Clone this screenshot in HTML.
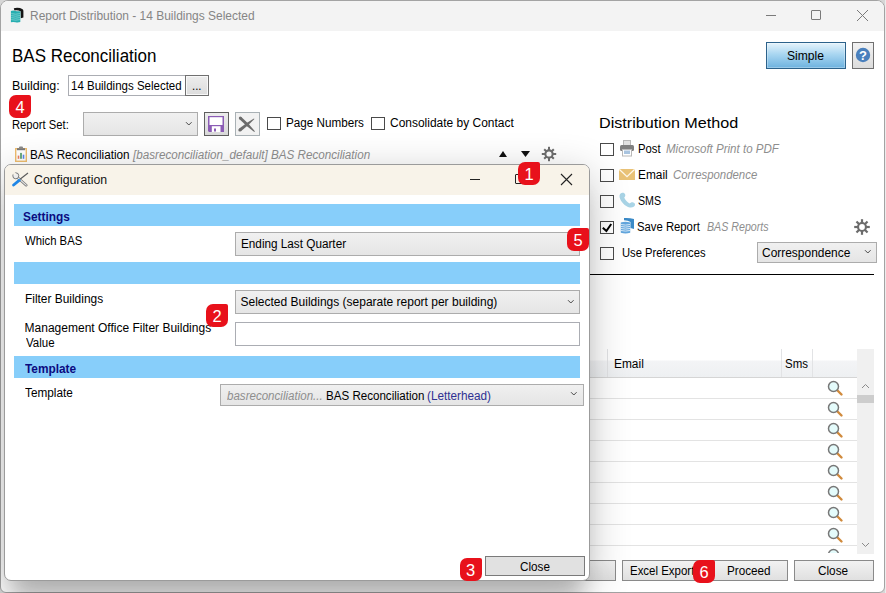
<!DOCTYPE html>
<html><head><meta charset="utf-8">
<style>
*{box-sizing:border-box;margin:0;padding:0}
html,body{width:886px;height:593px;overflow:hidden;background:#d6d6d6;position:relative}
body{font-family:"Liberation Sans",sans-serif;font-size:11.7px;color:#000}
.a{position:absolute}
.t{position:absolute;white-space:nowrap;line-height:20px;font-size:11.7px}
.i{font-style:italic;color:#9a9a9a}
.win{position:absolute;left:0;top:0;width:885px;height:593px;background:#fff;border:1px solid #a3a3a3;border-radius:8px 8px 6px 6px;overflow:hidden}
.tb{position:absolute;left:0;top:0;width:886px;height:31px;background:#f3f3f3}
.cb{position:absolute;width:14px;height:13px;border:1px solid #4a4a4a;background:#fff}
.btn{position:absolute;background:#e1e1e1;border:1px solid #adadad}
.combo{position:absolute;background:linear-gradient(#f0f0f0,#e5e5e5);border:1px solid #acacac}
.badge{position:absolute;width:22px;height:23px;background:#e8111b;border-radius:7px 2px 7px 7px;color:#fff;font-size:16.5px;line-height:24px;text-align:center}
.band{position:absolute;left:14px;width:566px;background:#87cefa}
.bt{font-weight:bold;color:#0b0b80}
</style></head><body>
<div class="a" style="left:885px;top:0;width:1px;height:593px;background:#ececec"></div>
<div class="win">
</div>
<!-- absolute coordinates in page space -->
<div class="a" style="left:1px;top:1px;width:883px;height:30px;background:#f3f3f3;border-radius:7px 7px 0 0"></div>

<!-- title icon -->
<svg class="a" style="left:10px;top:7px" width="15" height="17" viewBox="0 0 15 17">
<path d="M3.8 1.2 Q9 0.2 12.6 2.2 Q13.4 2.8 13.4 4 L13.4 10.6 L10.8 11.2 L10.6 4.2 Q7.6 2.8 4.4 3.4 Z" fill="#151515"/>
<path d="M0.9 4 Q3 3.2 5.5 3.9 Q8 4.6 10.3 4.2 L10.3 15 Q8 15.8 5.5 15.2 Q3 14.6 0.9 15.2 Z" fill="#27aeb0"/>
<path d="M1.2 6.6 Q5.5 7.8 10 6.6 M1.2 8.6 Q5.5 9.8 10 8.6 M1.2 10.6 Q5.5 11.8 10 10.6 M1.2 12.6 Q5.5 13.8 10 12.6" stroke="#8fd8d8" stroke-width="0.7" fill="none"/>
</svg>
<div class="t" style="left:29.7px;top:6px;font-size:12px;color:#858585;transform:scaleX(0.996);transform-origin:0 0">Report Distribution - 14 Buildings Selected</div>
<!-- caption buttons -->
<div class="a" style="left:766px;top:15px;width:10px;height:1px;background:#7a7a7a"></div>
<div class="a" style="left:811px;top:10px;width:10px;height:10px;border:1px solid #7a7a7a;border-radius:1px"></div>
<svg class="a" style="left:856px;top:9px" width="13" height="13" viewBox="0 0 13 13"><path d="M1 1 L12 12 M12 1 L1 12" stroke="#7a7a7a" stroke-width="1"/></svg>

<div class="t" style="left:12.43px;top:46px;font-size:17.5px;color:#000;transform:scaleX(0.9707);transform-origin:0 0">BAS Reconciliation</div>

<div class="a" style="left:766px;top:42px;width:80px;height:27px;border:1px solid #2c628b;background:linear-gradient(#e6f4fc,#a9d6f1 45%,#6db2df);box-shadow:inset 0 0 0 1px rgba(255,255,255,.3)"></div>
<div class="t" style="left:787.39px;top:46px;font-size:12px;color:#000;transform:scaleX(1.0086);transform-origin:0 0">Simple</div>
<div class="a" style="left:852px;top:42px;width:22px;height:27px;border:1px solid #707070;background:linear-gradient(#f2f2f2,#dcdcdc)"></div>
<svg class="a" style="left:853px;top:45px" width="20" height="20" viewBox="0 0 20 20"><circle cx="10" cy="10" r="7.2" fill="#4a80bd"/><text x="10" y="15" text-anchor="middle" font-family="Liberation Sans" font-weight="bold" font-size="13" fill="#fff">?</text></svg>

<div class="t" style="left:11.56px;top:76px;font-size:12px;color:#000;transform:scaleX(1.0364);transform-origin:0 0">Building:</div>
<div class="a" style="left:68px;top:75px;width:118px;height:21px;border:1px solid #abadb3;background:#fff"></div>
<div class="t" style="left:71.14px;top:76px;font-size:12px;color:#000;transform:scaleX(0.9588);transform-origin:0 0">14 Buildings Selected</div>
<div class="a" style="left:185px;top:75px;width:24px;height:21px;border:1px solid #707070;background:linear-gradient(#ededed,#dcdcdc);box-shadow:inset 0 0 0 1px #f8f8f8"></div>
<div class="t" style="left:191.65px;top:76px;font-size:12px;color:#000;transform:scaleX(0.95);transform-origin:0 0">...</div>

<div class="badge" style="left:9px;top:95px">4</div>

<div class="t" style="left:12.16px;top:115px;font-size:12px;color:#000;transform:scaleX(0.9356);transform-origin:0 0">Report Set:</div>
<div class="combo" style="left:83px;top:112px;width:115px;height:24px"></div>
<svg class="a" style="left:185px;top:120.5px" width="8" height="6" viewBox="0 0 8 6"><path d="M1 1.2 L3.8 4 L6.6 1.2" stroke="#4a4a4a" stroke-width="1" fill="none"/></svg>
<div class="a" style="left:204px;top:112px;width:25px;height:24px;border:1px solid #5e5e5e;background:linear-gradient(#ececec,#d9d9d9)"></div>
<svg class="a" style="left:208px;top:116px" width="16" height="16" viewBox="0 0 16 16"><path d="M0 0 H16 V16 H1 L0 15 Z" fill="#8b5cb5"/><rect x="1.5" y="1.2" width="13" height="7.8" fill="#fff"/><rect x="3.8" y="10.2" width="8.7" height="5.8" fill="#fff"/><rect x="6" y="12.5" width="2" height="3" fill="#8b5cb5"/></svg>
<div class="a" style="left:235px;top:112px;width:25px;height:24px;border:1px solid #a9b1b5;background:#f2f2f2"></div>
<svg class="a" style="left:236px;top:113px" width="24" height="23" viewBox="0 0 24 23"><g fill="#6c6c6c"><path d="M3.27 6.09 Q10.03 13.29 18.32 18.89 L18.88 18.31 Q12.86 10.31 5.34 3.91 Z"/><circle cx="4.3" cy="5" r="1.5"/><path d="M4.89 18.26 Q12.16 12.82 18.45 6.11 L17.95 5.49 Q9.94 9.98 2.91 15.74 Z"/><circle cx="3.9" cy="17" r="1.6"/></g></svg>

<div class="cb" style="left:267px;top:117px"></div>
<div class="t" style="left:285.83px;top:113px;font-size:12px;color:#000;transform:scaleX(0.9734);transform-origin:0 0">Page Numbers</div>
<div class="cb" style="left:371px;top:117px"></div>
<div class="t" style="left:389.8px;top:113px;font-size:12px;color:#000;transform:scaleX(0.9976);transform-origin:0 0">Consolidate by Contact</div>

<!-- report row -->
<svg class="a" style="left:15px;top:146px" width="12" height="16" viewBox="0 0 12 16"><rect x="0.7" y="2.7" width="10.6" height="12.6" fill="#fff" stroke="#efbd6e" stroke-width="1.4"/><rect x="2" y="2.2" width="8" height="2" fill="#7a7a7a"/><rect x="4" y="0.4" width="4" height="2.4" rx="1" fill="#8a8a8a"/><rect x="2.7" y="9.6" width="1.6" height="3.2" fill="#ef7d5e"/><rect x="5.1" y="6.9" width="1.8" height="5.9" fill="#5ea374"/><rect x="7.7" y="8.7" width="1.6" height="4.1" fill="#5a86ee"/></svg>
<div class="t" style="left:30.42px;top:145px;font-size:12px;color:#000;transform:scaleX(0.975);transform-origin:0 0">BAS Reconciliation</div>
<div class="t" style="left:133.0px;top:145px;font-size:12px;color:#8e8e8e;font-style:italic;transform:scaleX(0.9713);transform-origin:0 0">[basreconciliation_default] BAS Reconciliation</div>
<svg class="a" style="left:498px;top:150px" width="36" height="8" viewBox="0 0 36 8"><path d="M1 7 L5 1 L9 7 Z" fill="#111"/><path d="M23 1 L32 1 L27.5 7 Z" fill="#111"/></svg>
<svg class="a" style="left:541px;top:146px" width="16" height="16" viewBox="0 0 16 16"><g fill="#6e6e6e"><circle cx="8" cy="8" r="4.7"/><rect x="7" y="0.8" width="2" height="14.4"/><rect x="0.8" y="7" width="14.4" height="2"/><rect x="7" y="1.2" width="2" height="13.6" transform="rotate(45 8 8)"/><rect x="7" y="1.2" width="2" height="13.6" transform="rotate(-45 8 8)"/></g><circle cx="8" cy="8" r="2.6" fill="#fff"/></svg>

<!-- distribution method -->
<div class="t" style="left:599.16px;top:113px;font-size:15.5px;color:#000;transform:scaleX(1.0432);transform-origin:0 0">Distribution Method</div>
<div class="cb" style="left:600px;top:143px"></div>
<div class="cb" style="left:600px;top:169px"></div>
<div class="cb" style="left:600px;top:195px"></div>
<div class="cb" style="left:600px;top:221px"></div>
<svg class="a" style="left:600px;top:221px" width="14" height="13" viewBox="0 0 14 13"><path d="M2.8 6.8 L6.4 10 L11.2 3" stroke="#000" stroke-width="2" fill="none"/></svg>
<div class="cb" style="left:600px;top:247px"></div>

<div class="t" style="left:638.16px;top:139px;font-size:12px;color:#000;transform:scaleX(0.9391);transform-origin:0 0">Post</div>
<div class="t" style="left:666.44px;top:139px;font-size:12px;color:#8e8e8e;font-style:italic;transform:scaleX(0.9615);transform-origin:0 0">Microsoft Print to PDF</div>
<div class="t" style="left:637.71px;top:165px;font-size:12px;color:#000;transform:scaleX(0.9893);transform-origin:0 0">Email</div>
<div class="t" style="left:672.85px;top:165px;font-size:12px;color:#8e8e8e;font-style:italic;transform:scaleX(0.9494);transform-origin:0 0">Correspondence</div>
<div class="t" style="left:638.01px;top:191px;font-size:12px;color:#000;transform:scaleX(0.888);transform-origin:0 0">SMS</div>
<div class="t" style="left:637.46px;top:217px;font-size:12px;color:#000;transform:scaleX(0.9415);transform-origin:0 0">Save Report</div>
<div class="t" style="left:707.0px;top:217px;font-size:12px;color:#8e8e8e;font-style:italic;transform:scaleX(0.8884);transform-origin:0 0">BAS Reports</div>
<div class="t" style="left:621.77px;top:243px;font-size:12px;color:#000;transform:scaleX(0.9341);transform-origin:0 0">Use Preferences</div>
<div class="a" style="left:757px;top:242px;width:120px;height:21px;border:1px solid #acacac;background:linear-gradient(#f0f0f0,#e5e5e5)"></div>
<div class="t" style="left:762.4px;top:243px;font-size:12px;color:#000;transform:scaleX(0.9954);transform-origin:0 0">Correspondence</div>

<div class="a" style="left:589px;top:274px;width:285px;height:1px;background:#000"></div>


<!-- distribution icons -->
<svg class="a" style="left:619px;top:139px" width="17" height="18" viewBox="0 0 17 18">
<rect x="4.5" y="1.5" width="7" height="5" fill="#e2e2e2" stroke="#b8b8b8"/>
<rect x="1" y="6" width="14" height="6" rx="1.5" fill="#808080"/>
<rect x="3.5" y="10.5" width="9" height="6.5" fill="#fff" stroke="#b8b8b8"/>
<rect x="5" y="11.5" width="6" height="3.5" fill="#a9c4df"/>
</svg>
<svg class="a" style="left:619px;top:169px" width="17" height="12" viewBox="0 0 17 12">
<rect x="0" y="0" width="16" height="11" fill="#e9c277"/>
<path d="M0.3 0.3 L8 7.6 L15.7 0.3" stroke="#fff8ea" stroke-width="1.3" fill="none"/>
</svg>
<svg class="a" style="left:619px;top:192px" width="17" height="16" viewBox="0 0 17 16">
<path d="M3.2 0.8 C1.2 1.2 0.2 2.8 0.6 5.2 C1.4 9.2 6 14.6 10.8 15.4 C13.6 15.8 15.6 14.8 16 13 C16.2 11.6 15.4 10.6 13.8 10.2 C12.6 9.9 11.4 10.6 10.8 11.4 C8.6 10.4 6 7.6 5.2 5.4 C6 4.8 6.6 3.6 6.2 2.4 C5.8 1.2 4.6 0.6 3.2 0.8 Z" fill="#a9d4e6"/>
</svg>
<svg class="a" style="left:620px;top:217px" width="15" height="17" viewBox="0 0 15 17">
<path d="M4 1 Q9 0.5 14 2 L14 12 L10.5 11 L10.5 5 Q8 3.5 4 3.2 Z" fill="#3b8ac7"/>
<path d="M0.8 5.4 Q5.5 4.2 10.2 5.4 L10.2 15.8 Q5.5 17.2 0.8 15.8 Z" fill="#62a6dd"/>
<path d="M1 7.5 Q5.5 8.7 10 7.5 M1 9.5 Q5.5 10.7 10 9.5 M1 11.5 Q5.5 12.7 10 11.5 M1 13.5 Q5.5 14.7 10 13.5" stroke="#e4f0fb" stroke-width="0.9" fill="none"/>
</svg>
<svg class="a" style="left:854px;top:219px" width="16" height="16" viewBox="0 0 16 16"><g fill="#6b6b6b"><circle cx="8" cy="8" r="5"/><rect x="6.9" y="0.2" width="2.2" height="15.6"/><rect x="0.2" y="6.9" width="15.6" height="2.2"/><rect x="6.9" y="0.2" width="2.2" height="15.6" transform="rotate(45 8 8)"/><rect x="6.9" y="0.2" width="2.2" height="15.6" transform="rotate(-45 8 8)"/></g><circle cx="8" cy="8" r="2.9" fill="#fff"/></svg>
<svg class="a" style="left:864px;top:249px" width="8" height="6" viewBox="0 0 8 6"><path d="M1 1.2 L3.8 4 L6.6 1.2" stroke="#4a4a4a" stroke-width="1" fill="none"/></svg>

<!-- grid -->
<div class="a" style="left:589px;top:349px;width:268px;height:29px;background:linear-gradient(#fff 0,#fff 11px,#f3f4f6 12px,#eef0f2 28px);border-bottom:1px solid #d5d5d5"></div>
<div class="a" style="left:607px;top:349px;width:1px;height:28px;background:#e2e3e5"></div>
<div class="a" style="left:781px;top:349px;width:1px;height:28px;background:#e2e3e5"></div>
<div class="a" style="left:812px;top:349px;width:1px;height:28px;background:#e2e3e5"></div>
<div class="t" style="left:613.61px;top:354px;font-size:12px;color:#000;transform:scaleX(0.9929);transform-origin:0 0">Email</div>
<div class="t" style="left:785.14px;top:354px;font-size:12px;color:#000;transform:scaleX(0.9565);transform-origin:0 0">Sms</div>
<div class="a" style="left:857px;top:349px;width:17px;height:205px;background:#f0f0f0"></div>
<svg class="a" style="left:861px;top:383px" width="9" height="6" viewBox="0 0 9 6"><path d="M1 5 L4.5 1.5 L8 5" stroke="#8a8a8a" fill="none"/></svg>
<div class="a" style="left:857px;top:395px;width:17px;height:8px;background:#cdcdcd"></div>
<svg class="a" style="left:861px;top:542px" width="9" height="6" viewBox="0 0 9 6"><path d="M1 1 L4.5 4.5 L8 1" stroke="#8a8a8a" fill="none"/></svg>

<div class="a" style="left:589px;top:378px;width:268px;height:175px;overflow:hidden">
<div class="a" style="left:0;top:20px;width:268px;height:1px;background:#e3e3e3"></div>
<div class="a" style="left:0;top:41px;width:268px;height:1px;background:#e3e3e3"></div>
<div class="a" style="left:0;top:62px;width:268px;height:1px;background:#e3e3e3"></div>
<div class="a" style="left:0;top:83px;width:268px;height:1px;background:#e3e3e3"></div>
<div class="a" style="left:0;top:104px;width:268px;height:1px;background:#e3e3e3"></div>
<div class="a" style="left:0;top:125px;width:268px;height:1px;background:#e3e3e3"></div>
<div class="a" style="left:0;top:146px;width:268px;height:1px;background:#e3e3e3"></div>
<div class="a" style="left:0;top:167px;width:268px;height:1px;background:#e3e3e3"></div>
<svg class="a" style="left:237.5px;top:2px" width="17" height="17" viewBox="0 0 17 17"><path d="M9.5 9.5 L14.5 14.5" stroke="#d08a3c" stroke-width="2.4" stroke-linecap="round"/><circle cx="6.5" cy="6.5" r="5" fill="#e4fbfb" stroke="#777" stroke-width="1.5"/></svg>
<svg class="a" style="left:237.5px;top:23px" width="17" height="17" viewBox="0 0 17 17"><path d="M9.5 9.5 L14.5 14.5" stroke="#d08a3c" stroke-width="2.4" stroke-linecap="round"/><circle cx="6.5" cy="6.5" r="5" fill="#e4fbfb" stroke="#777" stroke-width="1.5"/></svg>
<svg class="a" style="left:237.5px;top:44px" width="17" height="17" viewBox="0 0 17 17"><path d="M9.5 9.5 L14.5 14.5" stroke="#d08a3c" stroke-width="2.4" stroke-linecap="round"/><circle cx="6.5" cy="6.5" r="5" fill="#e4fbfb" stroke="#777" stroke-width="1.5"/></svg>
<svg class="a" style="left:237.5px;top:65px" width="17" height="17" viewBox="0 0 17 17"><path d="M9.5 9.5 L14.5 14.5" stroke="#d08a3c" stroke-width="2.4" stroke-linecap="round"/><circle cx="6.5" cy="6.5" r="5" fill="#e4fbfb" stroke="#777" stroke-width="1.5"/></svg>
<svg class="a" style="left:237.5px;top:86px" width="17" height="17" viewBox="0 0 17 17"><path d="M9.5 9.5 L14.5 14.5" stroke="#d08a3c" stroke-width="2.4" stroke-linecap="round"/><circle cx="6.5" cy="6.5" r="5" fill="#e4fbfb" stroke="#777" stroke-width="1.5"/></svg>
<svg class="a" style="left:237.5px;top:107px" width="17" height="17" viewBox="0 0 17 17"><path d="M9.5 9.5 L14.5 14.5" stroke="#d08a3c" stroke-width="2.4" stroke-linecap="round"/><circle cx="6.5" cy="6.5" r="5" fill="#e4fbfb" stroke="#777" stroke-width="1.5"/></svg>
<svg class="a" style="left:237.5px;top:128px" width="17" height="17" viewBox="0 0 17 17"><path d="M9.5 9.5 L14.5 14.5" stroke="#d08a3c" stroke-width="2.4" stroke-linecap="round"/><circle cx="6.5" cy="6.5" r="5" fill="#e4fbfb" stroke="#777" stroke-width="1.5"/></svg>
<svg class="a" style="left:237.5px;top:149px" width="17" height="17" viewBox="0 0 17 17"><path d="M9.5 9.5 L14.5 14.5" stroke="#d08a3c" stroke-width="2.4" stroke-linecap="round"/><circle cx="6.5" cy="6.5" r="5" fill="#e4fbfb" stroke="#777" stroke-width="1.5"/></svg>
<svg class="a" style="left:237.5px;top:170px" width="17" height="17" viewBox="0 0 17 17"><path d="M9.5 9.5 L14.5 14.5" stroke="#d08a3c" stroke-width="2.4" stroke-linecap="round"/><circle cx="6.5" cy="6.5" r="5" fill="#e4fbfb" stroke="#777" stroke-width="1.5"/></svg>
</div>
<!-- bottom buttons -->
<div class="btn" style="left:560px;top:560px;width:56px;height:21px;border-color:#8a8a8a;background:linear-gradient(#f2f2f2,#e0e0e0)"></div>
<div class="btn" style="left:622px;top:560px;width:80px;height:21px;border-color:#8a8a8a;background:linear-gradient(#f2f2f2,#e0e0e0)"></div>
<div class="t" style="left:629.94px;top:561px;font-size:12px;color:#000;transform:scaleX(0.955);transform-origin:0 0">Excel Export</div>
<div class="btn" style="left:708px;top:560px;width:80px;height:21px;border-color:#8a8a8a;background:linear-gradient(#f2f2f2,#e0e0e0)"></div>
<div class="t" style="left:726.63px;top:561px;font-size:12px;color:#000;transform:scaleX(0.9744);transform-origin:0 0">Proceed</div>
<div class="btn" style="left:794px;top:560px;width:80px;height:21px;border-color:#8a8a8a;background:linear-gradient(#f2f2f2,#e0e0e0)"></div>
<div class="t" style="left:818.32px;top:561px;font-size:12px;color:#000;transform:scaleX(0.9793);transform-origin:0 0">Close</div>
<div class="badge" style="left:693px;top:560px">6</div>


<!-- configuration dialog -->
<div class="a" style="left:4px;top:164px;width:586px;height:417px;border:1px solid #9b9b9b;border-radius:7px;background:#fff;box-shadow:0 10px 40px rgba(0,0,0,0.24),0 26px 20px -8px rgba(0,0,0,0.17);overflow:hidden">
  <div class="a" style="left:0;top:0;width:584px;height:30px;background:#f8f3e9"></div>
</div>
<svg class="a" style="left:12px;top:172px" width="17" height="15" viewBox="0 0 17 15">
<path d="M5 5 L14.2 13.2" stroke="#7a7a7a" stroke-width="2.6" stroke-linecap="round"/>
<path d="M5 5 L14.2 13.2" stroke="#e6e6e6" stroke-width="1.1" stroke-linecap="round"/>
<circle cx="3.8" cy="3.8" r="3" fill="#ececec" stroke="#7a7a7a" stroke-width="1"/>
<path d="M1.2 0.6 L3.2 2.8 L2.6 3.6 L0.2 1.6 Z" fill="#f8f3e9"/>
<path d="M2.4 -0.2 L4.6 2.4 L3.6 3.2 L1 0.8 Z" fill="#f8f3e9"/>
<path d="M8 7.2 L16 1" stroke="#5a5a5a" stroke-width="1.1"/>
<path d="M1.6 13 L7.2 8.4" stroke="#1f86e6" stroke-width="2.8" stroke-linecap="round"/>
</svg>
<div class="t" style="left:34.28px;top:170px;font-size:12px;color:#111;transform:scaleX(1.0243);transform-origin:0 0">Configuration</div>
<div class="a" style="left:470px;top:179px;width:10px;height:1px;background:#222"></div>
<div class="a" style="left:515px;top:174px;width:10px;height:10px;border:1px solid #222;border-radius:1px"></div>
<svg class="a" style="left:560px;top:173px" width="13" height="13" viewBox="0 0 13 13"><path d="M1 1 L12 12 M12 1 L1 12" stroke="#222" stroke-width="1.1"/></svg>
<div class="badge" style="left:518px;top:162px">1</div>

<div class="band" style="top:204px;height:22px"></div>
<div class="t" style="left:23.31px;top:207px;font-size:12px;color:#0b0b80;font-weight:bold;transform:scaleX(0.9913);transform-origin:0 0">Settings</div>
<div class="t" style="left:25.4px;top:231px;font-size:12px;color:#000;transform:scaleX(0.9433);transform-origin:0 0">Which BAS</div>
<div class="combo" style="left:235px;top:232px;width:345px;height:24px"></div>
<div class="t" style="left:240.72px;top:234px;font-size:12px;color:#000;transform:scaleX(0.9783);transform-origin:0 0">Ending Last Quarter</div>
<div class="badge" style="left:567px;top:228px">5</div>

<div class="band" style="top:262px;height:22px"></div>
<div class="t" style="left:24.91px;top:289px;font-size:12px;color:#000;transform:scaleX(0.9922);transform-origin:0 0">Filter Buildings</div>
<div class="combo" style="left:235px;top:290px;width:345px;height:24px"></div>
<div class="t" style="left:240.5px;top:292px;font-size:12px;color:#000">Selected Buildings (separate report per building)</div>
<svg class="a" style="left:567px;top:298.5px" width="8" height="6" viewBox="0 0 8 6"><path d="M1 1.2 L3.8 4 L6.6 1.2" stroke="#4a4a4a" stroke-width="1" fill="none"/></svg>
<div class="t" style="left:24.6px;top:318px;font-size:12px;color:#000">Management Office Filter Buildings</div>
<div class="t" style="left:25.6px;top:333px;font-size:12px;color:#000;transform:scaleX(0.9586);transform-origin:0 0">Value</div>
<div class="a" style="left:235px;top:322px;width:345px;height:24px;border:1px solid #abadb3;background:#fff"></div>
<div class="badge" style="left:206px;top:303.5px">2</div>

<div class="band" style="top:356px;height:22px"></div>
<div class="t" style="left:25.4px;top:359px;font-size:12px;color:#0b0b80;font-weight:bold;transform:scaleX(0.9863);transform-origin:0 0">Template</div>
<div class="t" style="left:25.4px;top:383px;font-size:12px;color:#000;transform:scaleX(0.9812);transform-origin:0 0">Template</div>
<div class="combo" style="left:220px;top:384px;width:364px;height:22px"></div>
<div class="t" style="left:226.7px;top:386px;font-size:12px;color:#8e8e8e;font-style:italic;transform:scaleX(0.9633);transform-origin:0 0">basreconciliation...</div>
<div class="t" style="left:325.54px;top:386px;font-size:12px;color:#000;transform:scaleX(0.965);transform-origin:0 0">BAS Reconciliation</div>
<div class="t" style="left:427.02px;top:386px;font-size:12px;color:#2e3192;transform:scaleX(0.9781);transform-origin:0 0">(Letterhead)</div>
<svg class="a" style="left:570px;top:391px" width="8" height="6" viewBox="0 0 8 6"><path d="M1 1.2 L3.8 4 L6.6 1.2" stroke="#4a4a4a" stroke-width="1" fill="none"/></svg>

<div class="btn" style="left:485px;top:556px;width:100px;height:20px;border-color:#7a7a7a;background:#e1e1e1"></div>
<div class="t" style="left:519.92px;top:557px;font-size:12px;color:#000;transform:scaleX(0.9759);transform-origin:0 0">Close</div>
<div class="badge" style="left:459.5px;top:558px">3</div>

</body></html>
